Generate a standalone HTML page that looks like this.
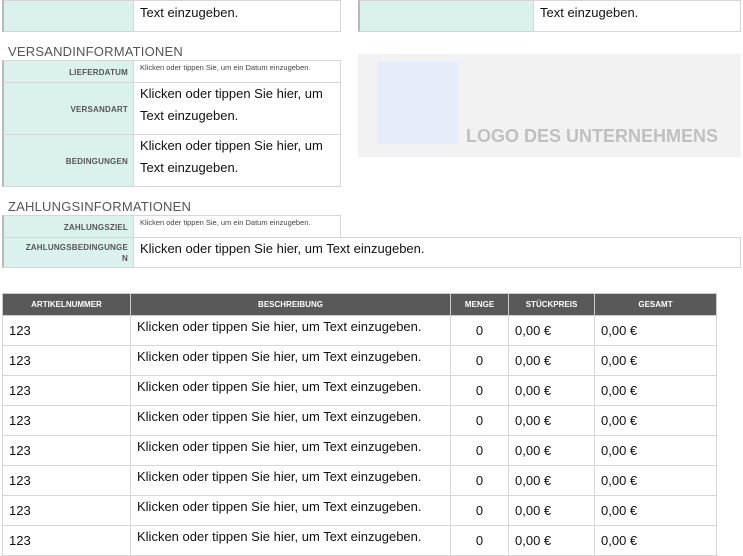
<!DOCTYPE html>
<html><head><meta charset="utf-8"><style>
*{margin:0;padding:0;box-sizing:border-box}
body{width:743px;height:548px;overflow:hidden;background:#fff;font-family:"Liberation Sans",sans-serif;position:relative}
.a{position:absolute}
.lab{position:absolute;background:#daf1ed;border:1px solid #d6d6d6;border-left:2px solid #b8b8b8;font-size:8px;font-weight:bold;color:#555;text-align:right;padding-right:5px;letter-spacing:.2px}
.val{position:absolute;background:#fff;border:1px solid #d6d6d6;font-size:13px;color:#111;padding-left:6px;line-height:22px}
.h{position:absolute;font-size:13px;color:#555;letter-spacing:.2px}
.sm{font-size:7.5px;color:#444;line-height:10px;padding-top:2px}
table{position:absolute;left:2px;top:293px;border-collapse:collapse;width:715px}
th{background:#595959;color:#fff;font-size:8px;height:22px;border:1px solid #ccc;font-weight:bold}
td{border:1px solid #d6d6d6;height:30px;font-size:13px;color:#111;padding-left:6px}
td.d{vertical-align:top;padding-top:3px}
</style></head><body>
<div class="lab" style="left:2px;top:0;width:132px;height:32px"></div>
<div class="val" style="left:133px;top:0;width:208px;height:32px;line-height:24px">Text einzugeben.</div>
<div class="lab" style="left:358px;top:0;width:176px;height:32px"></div>
<div class="val" style="left:533px;top:0;width:208px;height:32px;line-height:24px">Text einzugeben.</div>

<div class="h" style="left:8px;top:44px">VERSANDINFORMATIONEN</div>
<div class="lab" style="left:2px;top:60px;width:132px;height:23px;line-height:23px">LIEFERDATUM</div>
<div class="val sm" style="left:133px;top:60px;width:208px;height:23px">Klicken oder tippen Sie, um ein Datum einzugeben.</div>
<div class="lab" style="left:2px;top:82px;width:132px;height:53px;line-height:53px">VERSANDART</div>
<div class="val" style="left:133px;top:82px;width:208px;height:53px;padding-top:0">Klicken oder tippen Sie hier, um Text einzugeben.</div>
<div class="lab" style="left:2px;top:134px;width:132px;height:53px;line-height:53px">BEDINGUNGEN</div>
<div class="val" style="left:133px;top:134px;width:208px;height:53px">Klicken oder tippen Sie hier, um Text einzugeben.</div>

<div class="a" style="left:358px;top:54px;width:383px;height:103px;background:#f2f2f2"></div>
<div class="a" style="left:377px;top:62px;width:82px;height:82px;background:#e6ecfa"></div>
<div class="a" style="left:466px;top:126px;font-size:18px;font-weight:bold;color:#c0c0c0;white-space:nowrap">LOGO DES UNTERNEHMENS</div>

<div class="h" style="left:8px;top:199px">ZAHLUNGSINFORMATIONEN</div>
<div class="lab" style="left:2px;top:215px;width:132px;height:23px;line-height:23px">ZAHLUNGSZIEL</div>
<div class="val sm" style="left:133px;top:215px;width:208px;height:23px">Klicken oder tippen Sie, um ein Datum einzugeben.</div>
<div class="lab" style="left:2px;top:237px;width:132px;height:31px;line-height:11px;padding-top:4px">ZAHLUNGSBEDINGUNGE<br>N</div>
<div class="val" style="left:133px;top:237px;width:608px;height:31px">Klicken oder tippen Sie hier, um Text einzugeben.</div>

<table>
<tr><th style="width:128px">ARTIKELNUMMER</th><th style="width:320px">BESCHREIBUNG</th><th style="width:58px">MENGE</th><th style="width:86px">STÜCKPREIS</th><th>GESAMT</th></tr>
<tr><td>123</td><td class="d">Klicken oder tippen Sie hier, um Text einzugeben.</td><td style="text-align:center;padding:0">0</td><td>0,00 €</td><td>0,00 €</td></tr>
<tr><td>123</td><td class="d">Klicken oder tippen Sie hier, um Text einzugeben.</td><td style="text-align:center;padding:0">0</td><td>0,00 €</td><td>0,00 €</td></tr>
<tr><td>123</td><td class="d">Klicken oder tippen Sie hier, um Text einzugeben.</td><td style="text-align:center;padding:0">0</td><td>0,00 €</td><td>0,00 €</td></tr>
<tr><td>123</td><td class="d">Klicken oder tippen Sie hier, um Text einzugeben.</td><td style="text-align:center;padding:0">0</td><td>0,00 €</td><td>0,00 €</td></tr>
<tr><td>123</td><td class="d">Klicken oder tippen Sie hier, um Text einzugeben.</td><td style="text-align:center;padding:0">0</td><td>0,00 €</td><td>0,00 €</td></tr>
<tr><td>123</td><td class="d">Klicken oder tippen Sie hier, um Text einzugeben.</td><td style="text-align:center;padding:0">0</td><td>0,00 €</td><td>0,00 €</td></tr>
<tr><td>123</td><td class="d">Klicken oder tippen Sie hier, um Text einzugeben.</td><td style="text-align:center;padding:0">0</td><td>0,00 €</td><td>0,00 €</td></tr>
<tr><td>123</td><td class="d">Klicken oder tippen Sie hier, um Text einzugeben.</td><td style="text-align:center;padding:0">0</td><td>0,00 €</td><td>0,00 €</td></tr>
</table>
</body></html>
